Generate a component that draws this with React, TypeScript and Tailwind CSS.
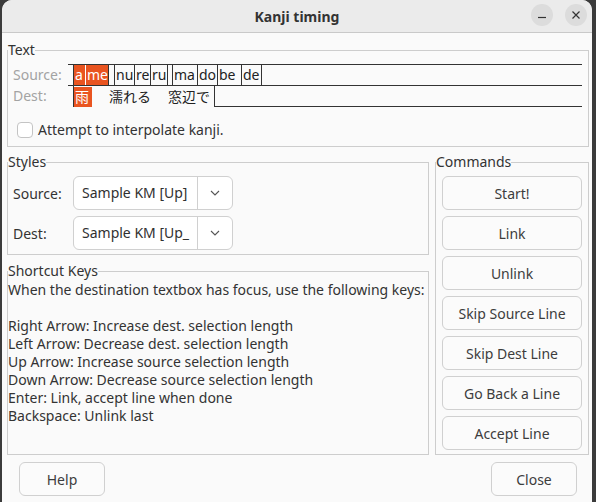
import React from 'react';

const font = "font-['Noto_Sans','Noto_Sans_CJK_JP',sans-serif]";

const sourceCells = [
    { t: 'a', w: 12, hl: true, sep: 'white' },
    { t: 'me', w: 23, hl: true },
    { t: '', w: 6 },
    { t: 'nu', w: 20 },
    { t: 're', w: 16 },
    { t: 'ru', w: 17 },
    { t: '', w: 5 },
    { t: 'ma', w: 25 },
    { t: 'do', w: 20 },
    { t: 'be', w: 24 },
    { t: 'de', w: 20 },
];

const commands = ['Start!', 'Link', 'Unlink', 'Skip Source Line', 'Skip Dest Line', 'Go Back a Line', 'Accept Line'];

const shortcutLines = [
    'When the destination textbox has focus, use the following keys:',
    '',
    'Right Arrow: Increase dest. selection length',
    'Left Arrow: Decrease dest. selection length',
    'Up Arrow: Increase source selection length',
    'Down Arrow: Decrease source selection length',
    'Enter: Link, accept line when done',
    'Backspace: Unlink last',
];

function Chevron() {
    return (
        <svg width="10" height="6" viewBox="0 0 10 6" fill="none">
            <path d="M1 1l4 4 4-4" stroke="#555" strokeWidth="1.1" />
        </svg>
    );
}

function Combo({ value }: { value: string }) {
    return (
        <div className="flex h-[34px] w-[160px] rounded-[6px] border border-[#d0d0d0] bg-white">
            <div className="flex-1 overflow-hidden whitespace-nowrap pl-[8px] leading-[32px] text-[#303030]">{value}</div>
            <div className="flex w-[35px] items-center justify-center border-l border-[#d0d0d0]">
                <Chevron />
            </div>
        </div>
    );
}

function Button({ label, className = '' }: { label: string; className?: string }) {
    return (
        <button className={`h-[34px] rounded-[6px] border border-[#d0d0d0] bg-[#fbfbfb] text-[#3d3d3d] ${className}`}>
            {label}
        </button>
    );
}

export default function App() {
    return (
        <div className={`h-[502px] w-[596px] overflow-hidden bg-[#3b3b3b] text-[14px] ${font}`}>
            <div className="mx-[2px] flex h-full w-[590px] flex-col rounded-t-[10px] bg-[#fafafa] text-[#333]">
                {/* Title bar */}
                <div className="relative flex h-[33px] shrink-0 items-center justify-center rounded-t-[10px] border-b border-[#c9c9c9] bg-[#ebebeb]">
                    <span className="font-bold text-[#333]">Kanji timing</span>
                    <div className="absolute right-[5px] top-[4px] flex gap-[12px]">
                        <div className="flex h-[22px] w-[22px] items-center justify-center rounded-full bg-[#dcdcdc]">
                            <svg width="8" height="8" viewBox="0 0 8 8"><path d="M0 6.5h8" stroke="#333" strokeWidth="1.2" /></svg>
                        </div>
                        <div className="flex h-[22px] w-[22px] items-center justify-center rounded-full bg-[#dcdcdc]">
                            <svg width="8" height="8" viewBox="0 0 8 8"><path d="M0.5 0.5l7 7M7.5 0.5l-7 7" stroke="#333" strokeWidth="1.2" /></svg>
                        </div>
                    </div>
                </div>

                <div className="flex flex-1 flex-col pl-[5px] pr-[3px]">
                    {/* Text */}
                    <fieldset className="mt-[7px] border border-[#cdcdcd]">
                        <legend className="leading-[20px]">Text</legend>
                        <div className="flex pt-[4px]">
                            <div className="w-[60px] shrink-0 pl-[5px] leading-[21px] text-[#a3a3a3]">
                                <div className="h-[21px]">Source:</div>
                                <div className="h-[21px]">Dest:</div>
                            </div>
                            <div className="w-[514px]">
                                <div className="flex h-[22px] border-y border-[#333]">
                                    <div className="w-[5px]" />
                                    <div className="flex border-l border-[#333]">
                                        {sourceCells.map((c, i) => (
                                            <div
                                                key={i}
                                                style={{ width: c.w }}
                                                className={`h-full border-r pl-[1px] leading-[20px] ${c.hl ? 'bg-[#e95420] text-white' : 'text-[#222]'} ${c.sep === 'white' ? 'border-white' : 'border-[#333]'}`}
                                            >
                                                {c.t}
                                            </div>
                                        ))}
                                    </div>
                                </div>
                                <div className="flex h-[21px]">
                                    <div className="w-[5px]" />
                                    <div className="flex w-[141px] overflow-hidden border-l border-[#333] font-['Noto_Sans_CJK_JP',sans-serif] text-[#222]">
                                        <div className="mt-[1px] h-[20px] w-[18px] bg-[#e95420] pl-[1px] text-[14px] leading-[19px] text-white">雨</div>
                                        <span className="ml-[17px] leading-[20px]">濡れる</span>
                                        <span className="ml-[17px] leading-[20px]">窓辺で</span>
                                    </div>
                                    <div className="flex-1 border-b border-l border-[#333]" />
                                </div>
                            </div>
                        </div>
                        <div className="flex items-center pb-[8px] pl-[9px] pt-[15px]">
                            <div className="h-[16px] w-[16px] rounded-[4px] border border-[#c4c4c4] bg-white" />
                            <span className="ml-[5px] leading-[16px]">Attempt to interpolate kanji.</span>
                        </div>
                    </fieldset>

                    <div className="mt-[5px] flex gap-[6px]">
                        <div className="flex w-[422px] flex-col">
                            {/* Styles */}
                            <fieldset className="border border-[#cdcdcd]">
                                <legend className="leading-[20px]">Styles</legend>
                                <div className="flex flex-col gap-[6px] pb-[4px] pl-[5px] pt-[4px]">
                                    <div className="flex items-center">
                                        <span className="w-[60px]">Source:</span>
                                        <Combo value="Sample KM [Up]" />
                                    </div>
                                    <div className="flex items-center">
                                        <span className="w-[60px]">Dest:</span>
                                        <Combo value="Sample KM [Up_" />
                                    </div>
                                </div>
                            </fieldset>
                            {/* Shortcut keys */}
                            <fieldset className="mt-[6px] flex-1 border border-[#cdcdcd]">
                                <legend className="leading-[20px]">Shortcut Keys</legend>
                                <div className="leading-[18px]">
                                    {shortcutLines.map((l, i) => (
                                        <div key={i} className="h-[18px] whitespace-nowrap">{l}</div>
                                    ))}
                                </div>
                            </fieldset>
                        </div>
                        {/* Commands */}
                        <fieldset className="w-[154px] border border-[#cdcdcd]">
                            <legend className="leading-[20px]">Commands</legend>
                            <div className="flex flex-col gap-[6px] px-[6px] pb-[4px] pt-[4px]">
                                {commands.map((c) => (
                                    <Button key={c} label={c} className="w-[140px]" />
                                ))}
                            </div>
                        </fieldset>
                    </div>

                    <div className="mt-[7px] flex justify-between pl-[12px] pr-[12px]">
                        <Button label="Help" className="w-[86px]" />
                        <Button label="Close" className="w-[86px]" />
                    </div>
                </div>
            </div>
        </div>
    );
}
